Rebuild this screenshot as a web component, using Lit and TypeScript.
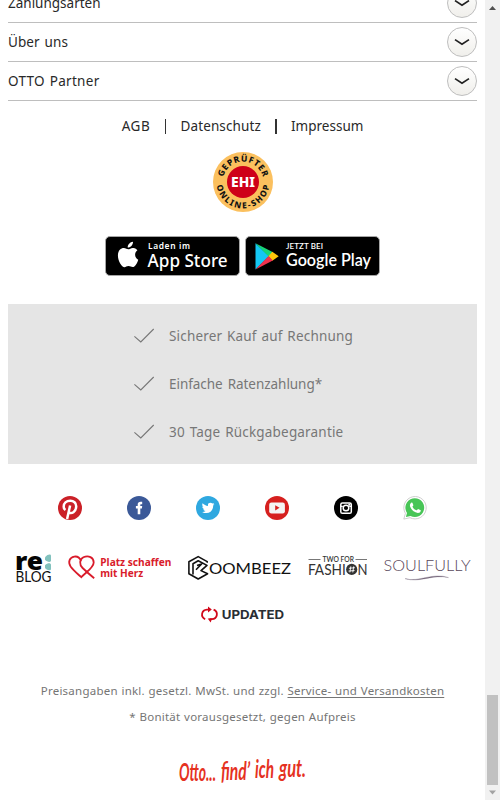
import { LitElement, html, css, svg } from "lit";
import { customElement } from "lit/decorators.js";

const SECTIONS = [
  { text: "Zahlungsarten", cls: "s1" },
  { text: "Über uns", cls: "s2" },
  { text: "OTTO Partner", cls: "s3" },
];
const BENEFITS = [
  { text: "Sicherer Kauf auf Rechnung", cls: "b1" },
  { text: "Einfache Ratenzahlung*", cls: "b2" },
  { text: "30 Tage Rückgabegarantie", cls: "b3" },
];

const SOCIAL = [
  svg`<circle cx="12" cy="12" r="12" fill="#cb2027"/><path d="M9.1 23L12.1 9.5M10.6 16.2C13.5 18.4 18 15.8 18.2 10.5C18.3 6.8 15.6 4.7 12.3 4.7C8.2 4.7 5.7 7.4 5.7 10.6C5.7 12.2 6.3 13.3 7.5 14" fill="none" stroke="#fff" stroke-width="2.5"/>`,
  svg`<circle cx="12" cy="12" r="12" fill="#3b5998"/><path d="M10.7 18.2V12.6H8.9V10.1H10.7V8.7C10.7 6.7 11.8 5.8 13.5 5.8H15.2V8.2H14.2C13.5 8.2 13.3 8.5 13.3 9.1V10.1H15.2L14.9 12.6H13.3V18.2Z" fill="#fff"/>`,
  svg`<circle cx="12" cy="12" r="12" fill="#2fa8e0"/><path d="M6.6 7.3C8.1 8.9 9.9 9.8 12 9.9C11.6 7.8 12.8 6.8 14.4 6.8C15.3 6.8 15.9 7.1 16.4 7.6L18 7.1L17.1 8.5L18.4 8.2L17.2 9.6C17.3 13.8 14.4 17.1 10.5 17.1C8.8 17.1 7.3 16.7 6.1 15.9C7.6 16 8.7 15.6 9.6 14.9C8.3 14.8 7.6 14.1 7.3 13.2H8.4C7.2 12.8 6.3 11.9 6.3 10.6L7.4 10.9C6.2 10 5.9 8.5 6.6 7.3Z" fill="#fff"/>`,
  svg`<circle cx="12" cy="12" r="12" fill="#d6201f"/><rect x="4.2" y="6.4" width="15.7" height="11.2" rx="2.3" fill="#f4f4f4"/><path d="M10.2 9.3V14.4L14.6 11.8Z" fill="#d6201f"/>`,
  svg`<circle cx="12" cy="12" r="12" fill="#000"/><rect x="6.8" y="6.9" width="10.5" height="10.4" rx="1.6" fill="none" stroke="#fff" stroke-width="1.5"/><circle cx="12" cy="12" r="2.8" fill="none" stroke="#fff" stroke-width="1.5"/><path d="M6.3 10.4H8.8M15.2 10.4H17.8" stroke="#fff" stroke-width="1.2"/><rect x="14.3" y="7.7" width="2" height="2" fill="#fff"/>`,
  svg`<path d="M.8 23.1L2.4 17.4A11.2 11.2 0 1 1 7 21.7Z" fill="#fff" stroke="#c4c4c4" stroke-width=".8"/><path d="M2.9 21L4 16.9A9.4 9.4 0 1 1 7.5 20Z" fill="#48c557"/><path d="M8.6 6.6C9.2 6.5 9.5 6.8 10.4 9.3C10.4 9.7 9.6 10.3 9.5 10.7C10.3 12.4 11.6 13.7 13.5 14.3C14.1 14.2 14.6 12.9 15.1 12.9L17.8 14.3C17.9 16.3 16.1 17 14.8 16.9C11 16.4 8.2 13.7 7.1 10.6C6.6 9 7.3 7.2 8.6 6.6Z" fill="#fff"/>`,
];

@customElement("app-root")
export class AppRoot extends LitElement {
  static styles = css`
    :host { display: flex; width: 500px; height: 800px; overflow: hidden; background: #fff; font-family: "Noto Sans", sans-serif; color: #292929; }
    * { box-sizing: border-box; }
    svg { display: block; flex: none; overflow: visible; }
    .page { width: 485px; height: 800px; padding: 0 8px; overflow: hidden; }
    .sections { margin-top: -16px; }
    .section { height: 39px; border-bottom: 1px solid #bebebe; display: flex; align-items: center; justify-content: space-between; font-size: 13.5px; }
    .s1 { letter-spacing: 0; }
    .s2 { letter-spacing: .05px; word-spacing: 1.5px; }
    .s3 { letter-spacing: .3px; word-spacing: 1px; }
    .toggle { width: 30px; height: 30px; border-radius: 50%; border: 1px solid #bebebe; background: linear-gradient(#fff, #f0efeb); display: flex; align-items: center; justify-content: center; }
    .legal { height: 51px; padding-bottom: 1px; display: flex; justify-content: center; align-items: center; gap: 14.3px; font-size: 13.5px; letter-spacing: .12px; }
    .agb { letter-spacing: .6px; }
    .imp { letter-spacing: 0; }
    .bar { width: 1.5px; height: 15px; background: #333; }
    .seal { display: flex; justify-content: center; height: 84px; padding-left: 1px; }
    .stores { display: flex; justify-content: center; gap: 5px; height: 68px; }
    .benefits { width: 469px; height: 160px; background: #e5e5e5; padding: 8px 0 8px 126px; color: #777; font-size: 13.5px; }
    .benefit { height: 48px; display: flex; align-items: center; gap: 15px; }
    .b1 { letter-spacing: .18px; word-spacing: 1.1px; }
    .b2 { letter-spacing: -.04px; word-spacing: 1.5px; }
    .b3 { letter-spacing: .18px; word-spacing: 1.2px; }
    .social { display: flex; gap: 45px; padding: 32px 0 0 50px; height: 88px; }
    .brands { display: flex; height: 52px; padding-left: 8px; gap: 16px; }
    .brands2 { display: flex; justify-content: center; height: 73px; }
    .note { height: 26px; display: flex; align-items: center; justify-content: center; color: #757575; font-size: 11.5px; letter-spacing: .24px; word-spacing: .4px; white-space: pre; }
    .note u { text-underline-offset: 2px; }
    .claim { display: flex; justify-content: center; padding: 28px 0 0 1px; }
    .scroll { width: 15px; height: 800px; background: #f1f1f1; display: flex; flex-direction: column; align-items: center; justify-content: space-between; }
    .thumb { width: 11px; height: 90px; margin-top: auto; background: #c1c1c1; }
  `;

  render() {
    return html`
      <div class="page">
        <div class="sections">
          ${SECTIONS.map((s) => html`<div class="section"><span class=${s.cls}>${s.text}</span>
            <span class="toggle"><svg width="16" height="8"><path d="M1 1.6L8 6.2L15 1.6" fill="none" stroke="#222" stroke-width="1.7"/></svg></span></div>`)}
        </div>
        <nav class="legal"><a class="agb">AGB</a><span class="bar"></span><a>Datenschutz</a><span class="bar"></span><a class="imp">Impressum</a></nav>
        <div class="seal">
          <svg width="60" height="60" viewBox="0 0 60 60" font-weight="800" text-anchor="middle">
            <defs><path id="top" d="M9.6 30A20.4 20.4 0 0 1 50.4 30"/><path id="bottom" d="M3.8 26A26.5 26.5 0 1 0 56.2 26"/></defs>
            <circle cx="30" cy="30" r="30" fill="#fbc05e"/><circle cx="30" cy="30" r="16" fill="#ce0019"/>
            <text x="30" y="35.2" font-size="14.5" fill="#fff" textLength="24" lengthAdjust="spacingAndGlyphs">EHI</text>
            <text font-size="8.6" fill="#111"><textPath href="#top" startOffset="50%" textLength="54">GEPRÜFTER</textPath></text>
            <text font-size="8.4" fill="#111"><textPath href="#bottom" startOffset="50%" textLength="76">ONLINE-SHOP</textPath></text>
          </svg>
        </div>
        <div class="stores">
          <svg width="135" height="40" fill="#fff">
            <rect x=".5" y=".5" width="134" height="39" rx="4.5" fill="#000" stroke="#a6a6a6"/>
            <path d="M28.5 11.1C30.8 10.9 32.1 12 33 13.1C29.8 15.2 30.1 19.8 33.8 21.3C32.8 24.6 30.6 27.7 28.5 27.7C26.9 27.7 26.3 26.8 24.4 26.8C22.4 26.8 21.8 27.7 20.5 27.8C17.9 27.8 14.1 22.5 14.1 17.8C14.1 13.2 17.1 11.2 19.8 11.2C21.6 11.2 22.9 12.3 24.1 12.3C25.3 12.3 26.8 11.2 28.5 11.1Z" transform="translate(-1.6 -.8) scale(1.03 1.15)"/>
            <path d="M28.4 6.1C28.6 9 26.1 12 23.1 11.9C22.8 9.2 25.5 6.3 28.4 6.1Z" transform="translate(-.4 -.4)"/>
            <text x="43" y="13.4" font-size="8.4" font-weight="600" textLength="42">Laden im</text>
            <text x="42.6" y="31.4" font-size="18" font-weight="500" textLength="80" lengthAdjust="spacingAndGlyphs">App Store</text>
          </svg>
          <svg width="135" height="40" fill="#fff">
            <rect x=".5" y=".5" width="134" height="39" rx="4.5" fill="#000" stroke="#a6a6a6"/>
            <path d="M10.5 7.2V33.4L24 20.2Z" fill="#14c7f3"/><path d="M10.5 7.2L28 16.2L23.6 20.4Z" fill="#17d477"/><path d="M27.3 15.8L33.7 20.2L27.3 24.7L23.4 20.2Z" fill="#ffc70a"/><path d="M10.5 33.4L27.8 24.4L23.6 20.1Z" fill="#ef314d"/>
            <text x="41" y="13.2" font-family="Lato, sans-serif" font-size="8" font-weight="600" textLength="37">JETZT BEI</text>
            <text x="41" y="30.4" font-family="Lato, sans-serif" font-size="18" font-weight="600" textLength="85" lengthAdjust="spacingAndGlyphs">Google Play</text>
          </svg>
        </div>
        <div class="benefits">
          ${BENEFITS.map((b) => html`<div class="benefit"><svg width="20" height="16"><path d="M.4 8.4L6.8 14L19.7 1" fill="none" stroke="#777" stroke-width="1.1"/></svg><span class=${b.cls}>${b.text}</span></div>`)}
        </div>
        <div class="social">${SOCIAL.map((s) => html`<svg width="24" height="24">${s}</svg>`)}</div>
        <div class="brands">
          <svg width="35" height="32">
            <text x="-1" y="17.5" font-size="25" font-weight="900" textLength="28" lengthAdjust="spacingAndGlyphs" fill="#050505">re</text>
            <path d="M29 5.2C32 2 35 2 35 4V8.5C35 10.8 31 10.2 29 7.8Z" fill="#82c2be"/><path d="M29 13.2C32 10.4 35 11 35 13V17C35 19 31 18.4 29 16Z" fill="#82c2be"/>
            <text x="-.5" y="29.6" font-family="Lato, sans-serif" font-size="14.4" textLength="36" lengthAdjust="spacingAndGlyphs" fill="#111">BLOG</text>
          </svg>
          <svg width="105" height="32" viewBox="-1 0 105 32" fill="#d91b2b" font-weight="700">
            <path d="M26.2 26.2C22 22.8 18.6 19.9 14.6 16C11 12.5 11.5 7.3 15.4 5.3C20.5 2.8 25.7 5.6 25.7 10.4C25.7 15.5 18.5 19.8 13.3 25.2C9.6 21.8 5.2 18.3 2.6 14.5C-.4 9.8 1.7 5.5 6.2 4.6C10 3.9 12.2 6.8 13.2 9.2" fill="none" stroke="#d91b2b" stroke-width="1.8"/>
            <text x="32.3" y="14.3" font-size="10.4" textLength="71" lengthAdjust="spacingAndGlyphs">Platz schaffen</text>
            <text x="32.3" y="24.8" font-size="10.4" textLength="43" lengthAdjust="spacingAndGlyphs">mit Herz</text>
          </svg>
          <svg width="104" height="32" viewBox="1 0 104 32">
            <path d="M20.2 10.8V9.6L11.2 4.6L1.9 9.8V21.8L11.2 27L20.6 21.8L14 18.6L20 13.4L11.2 8.8L6 11.8V22.5M10 13.6L14.6 12L9 17.7" fill="none" stroke="#111" stroke-width="1.6" stroke-linejoin="round"/>
            <text x="22" y="21.5" font-family="Lato, sans-serif" font-size="16" fill="#111" textLength="82" lengthAdjust="spacingAndGlyphs">OOMBEEZ</text>
          </svg>
          <svg width="60" height="32" viewBox="-.5 0 60 32" font-family="Lato, sans-serif" fill="#333">
            <path d="M0 7.5H12M47 7.5H58.5" stroke="#777"/>
            <text x="14" y="9.7" font-size="6.8" font-weight="600" textLength="31.5" lengthAdjust="spacingAndGlyphs">TWO FOR</text>
            <text x="-.6" y="22.8" font-size="15.6" textLength="38" lengthAdjust="spacingAndGlyphs">FASHI</text>
            <circle cx="43.2" cy="17.4" r="5.6"/><path d="M42.3 14.4L41.4 20.4M45.2 14.4L44.3 20.4M40.4 16.3L46.4 15.7M40 19.1L46 18.5" stroke="#fff" stroke-width=".9"/>
            <text x="49" y="22.8" font-size="15.6" textLength="10" lengthAdjust="spacingAndGlyphs">N</text>
          </svg>
          <svg width="88" height="32">
            <text x="-.4" y="19" font-family="Lato, sans-serif" font-size="14.6" font-weight="300" fill="#57475a" textLength="87" lengthAdjust="spacingAndGlyphs">SOULFULLY</text>
            <path d="M21 26.6C34 30.8 49 19.9 64.5 25.6C49 21.8 35 31.4 21 26.6Z" fill="#75657a" stroke="#75657a" stroke-width=".3"/>
          </svg>
        </div>
        <div class="brands2">
          <svg width="84" height="24">
            <path d="M4.2 15.2C-.8 12.8 .4 5.9 6 5.6H8M12.6 5.6C17.6 7.6 16.8 14.8 10.8 15.2H8.4" fill="none" stroke="#d2081a" stroke-width="1.8"/><path d="M7 2.4L10.8 5.6L7 8.4ZM6.7 14.4H11.2L9.6 18.6Z" fill="#d2081a"/>
            <text x="20.7" y="15.2" font-family="Inter, sans-serif" font-size="12.2" font-weight="700" fill="#292e33" textLength="62.5" lengthAdjust="spacingAndGlyphs">UPDATED</text>
          </svg>
        </div>
        <div class="note">Preisangaben inkl. gesetzl. MwSt. und zzgl. <u>Service- und Versandkosten</u></div>
        <div class="note">* Bonität vorausgesetzt, gegen Aufpreis</div>
        <div class="claim">
          <svg width="128" height="36" font-family="Lato, sans-serif" font-style="italic" font-weight="700" fill="#e5321f">
            <text x="0" y="24" font-size="25" textLength="37" lengthAdjust="spacingAndGlyphs">Otto...</text>
            <text x="42" y="22.5" font-size="25" textLength="29" lengthAdjust="spacingAndGlyphs">find’</text>
            <text x="76" y="20.5" font-size="24" textLength="19" lengthAdjust="spacingAndGlyphs">ich</text>
            <text x="100" y="19.5" font-size="24" textLength="27" lengthAdjust="spacingAndGlyphs">gut.</text>
          </svg>
        </div>
      </div>
      <div class="scroll">
        <svg width="15" height="15"><path d="M4 10L7.5 6L11 10Z" fill="#505050"/></svg>
        <div class="thumb"></div>
        <svg width="15" height="15"><path d="M4 5.5H11L7.5 9.5Z" fill="#a3a3a3"/></svg>
      </div>`;
  }
}
